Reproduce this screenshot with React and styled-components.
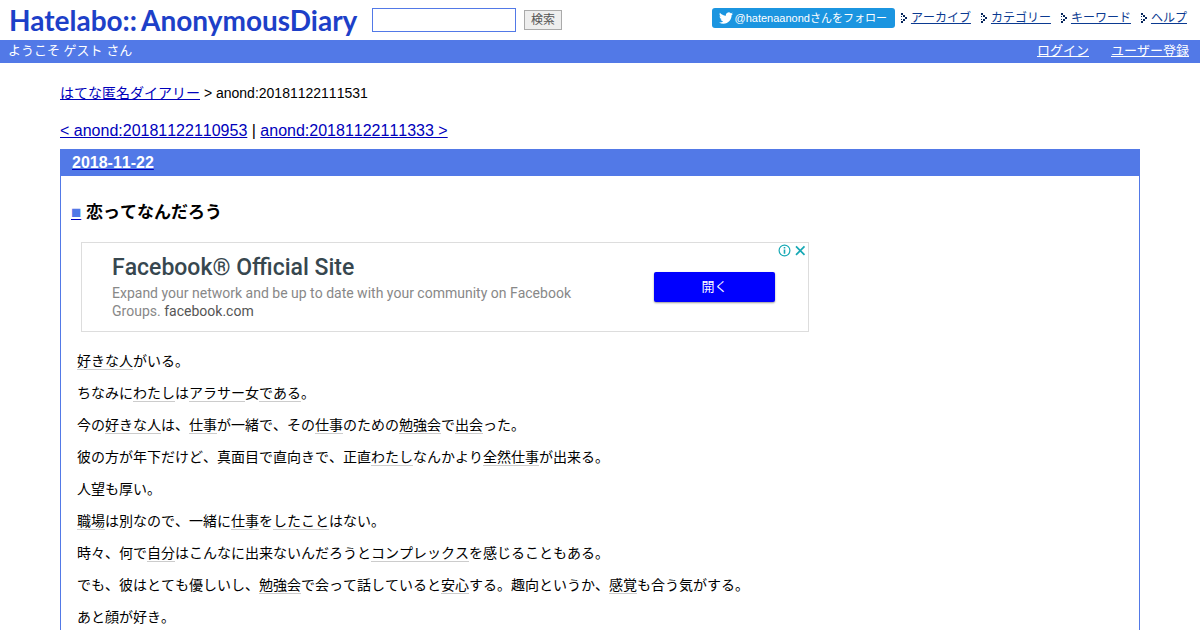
import React from "react";
import styled, { createGlobalStyle } from "styled-components";

const sans = `"Liberation Sans", "Noto Sans CJK JP", sans-serif`;

const GlobalStyle = createGlobalStyle`
  * { box-sizing: border-box; }
  body { margin: 0; background: #fff; color: #000; font-family: ${sans}; font-size: 14px; font-kerning: none; }
  a { color: #0000bb; }
`;

const Header = styled.header`
  display: flex;
  align-items: center;
  height: 40px;
  padding: 0 13px 0 9px;
`;

const Logo = styled.a`
  display: flex;
  gap: 4px;
  color: #1d40c8;
  font-family: Lato, ${sans};
  font-size: 28px;
  font-kerning: auto;
  font-weight: 700;
  line-height: 40px;
  text-decoration: none;
  width: 363px;
`;

const SearchForm = styled.form`
  display: flex;
  align-items: center;
  gap: 8px;
`;

const SearchInput = styled.input`
  width: 144px;
  height: 24px;
  border: 1px solid #5279e7;
  padding: 0 4px;
  font: 14px ${sans};
`;

const SearchButton = styled.button`
  width: 38px;
  height: 20px;
  padding: 0;
  border: 1px solid #aaa;
  background: #eee;
  color: #555;
  font: 12px/16px ${sans};
`;

const Tools = styled.div`
  display: flex;
  align-items: center;
  gap: 6px;
  margin-left: auto;
  padding-bottom: 4px;
`;

const FollowLink = styled.a`
  display: flex;
  align-items: center;
  gap: 2px;
  height: 20px;
  padding: 0 8px 0 7px;
  border-radius: 3px;
  background: #1b95e0;
  color: #fff;
  font-size: 11px;
  line-height: 20px;
  text-decoration: none;
  white-space: nowrap;
`;

const ToolList = styled.ul`
  display: flex;
  gap: 10px;
  margin: 0;
  padding: 0;
  list-style: none;
`;

const ToolItem = styled.li`
  display: flex;
  align-items: center;
  gap: 3px;
  font-size: 12px;
  line-height: 20px;
  white-space: nowrap;
  a { color: #0b3a91; }
`;

const UserBar = styled.div`
  display: flex;
  justify-content: space-between;
  height: 23px;
  padding: 0 11px 0 8px;
  background: #5279e7;
  color: #fff;
  font-size: 13px;
  line-height: 22px;
`;

const UserLinks = styled.nav`
  display: flex;
  gap: 22px;
  a { color: #fff; }
`;

const Main = styled.main`
  margin: 20px 60px 0;
`;

const Breadcrumb = styled.nav`
  line-height: 20px;
`;

const Pager = styled.nav`
  margin: 18px 0 8px;
  font-size: 16px;
  line-height: 20px;
`;

const Day = styled.section`
  border: 1px solid #5279e7;
  border-top: 0;
  padding-bottom: 20px;
`;

const DayTitle = styled.h2`
  margin: 0;
  padding: 0 11px;
  background: #5279e7;
  font-size: 16px;
  line-height: 27px;
  span { color: #fff; }
`;

const PostTitle = styled.h3`
  margin: 24px 10px 17px;
  font-size: 17px;
  line-height: 25px;
`;

const Anchor = styled.a`
  span { color: #5279e7; }
`;

const Ad = styled.aside`
  display: flex;
  align-items: center;
  position: relative;
  max-width: 728px;
  height: 90px;
  margin: 0 20px 19px;
  padding: 0 33px 0 30px;
  border: 1px solid #ddd;
  font-family: Roboto, "Noto Sans CJK JP", sans-serif;
`;

const AdText = styled.div`
  flex: 1;
  color: #888;
  font-size: 14px;
  line-height: 18px;
`;

const AdTitle = styled.div`
  margin-bottom: 2px;
  color: #37474f;
  font-size: 23px;
  font-weight: 500;
  line-height: 28px;
`;

const AdCopy = styled.p`
  max-width: 480px;
  margin: 0;
  span { color: #555; }
`;

const AdButton = styled.button`
  width: 121px;
  height: 30px;
  padding: 0;
  border: 0;
  border-radius: 2px;
  background: #0000ff;
  box-shadow: 0 1px 2px rgba(0, 0, 0, 0.4);
  color: #fff;
  font: 13px/30px Roboto, "Noto Sans CJK JP", sans-serif;
`;

const AdMarks = styled.div`
  position: absolute;
  top: 1px;
  right: 2px;
  display: flex;
  gap: 3px;
`;

const Body = styled.div`
  padding: 0 16px;
  line-height: 20px;
  p { margin: 0 0 12px; }
`;

const Keyword = styled.a`
  border-bottom: 1px solid #ccc;
  && { color: #000; }
  text-decoration: none;
`;

const Bullet = () => (
  <svg width="7" height="10" viewBox="0 0 7 10" shapeRendering="crispEdges" aria-hidden="true">
    <path fill="#06265c" d="M0 0h2v2H0zM2 2h2v2H2zM0 3h1v1H0zM4 4h2v2H4zM2 6h2v2H2zM0 6h1v1H0zM0 8h2v2H0z" />
  </svg>
);

const TwitterBird = () => (
  <svg width="14" height="14" viewBox="0 0 24 24" fill="#fff" aria-hidden="true">
    <path d="M23.95 4.57a10 10 0 0 1-2.82.77 4.96 4.96 0 0 0 2.16-2.72c-.95.55-2 .95-3.13 1.18a4.92 4.92 0 0 0-8.38 4.48C7.69 8.1 4.07 6.13 1.64 3.16a4.82 4.82 0 0 0-.67 2.48c0 1.71.87 3.21 2.19 4.1a4.9 4.9 0 0 1-2.23-.62v.06a4.92 4.92 0 0 0 3.95 4.83 5 5 0 0 1-2.21.08 4.94 4.94 0 0 0 4.6 3.42A9.87 9.87 0 0 1 0 19.54a13.99 13.99 0 0 0 7.56 2.21c9.05 0 14-7.5 14-13.98 0-.21 0-.42-.02-.63a9.94 9.94 0 0 0 2.46-2.55z" />
  </svg>
);

const tools = ["アーカイブ", "カテゴリー", "キーワード", "ヘルプ"];

// Words in square brackets are linked to their keyword page.
const paragraphs = [
  "[好きな人]がいる。",
  "ちなみに[わたし]は[アラサー]女[である]。",
  "今の[好きな人]は、[仕事]が一緒で、その[仕事]のための[勉強会]で[出会]った。",
  "彼の方が年下だけど、真面目で直向きで、正直[わたし]なんかより[全然][仕事]が出来る。",
  "人望も厚い。",
  "[職場]は別なので、一緒に[仕事]を[したこと]はない。",
  "時々、何で[自分]はこんなに出来ないんだろうと[コンプレックス]を感じることもある。",
  "でも、彼はとても優しいし、[勉強会]で会って話していると[安心]する。趣向というか、[感覚]も合う気がする。",
  "あと顔が好き。",
];

const renderText = (text) =>
  text.split(/(\[[^\]]+\])/).map((part, i) =>
    part.startsWith("[") ? (
      <Keyword key={i} href="#keyword">{part.slice(1, -1)}</Keyword>
    ) : (
      part
    )
  );

export default function App() {
  return (
    <>
      <GlobalStyle />
      <Header>
        <Logo href="#top">
          <span>Hatelabo::</span>
          <span>AnonymousDiary</span>
        </Logo>
        <SearchForm onSubmit={(e) => e.preventDefault()}>
          <SearchInput type="text" aria-label="検索" />
          <SearchButton type="submit">検索</SearchButton>
        </SearchForm>
        <Tools>
          <FollowLink href="#follow">
            <TwitterBird />
            <span>@hatenaanondさんをフォロー</span>
          </FollowLink>
          <ToolList>
            {tools.map((name) => (
              <ToolItem key={name}>
                <Bullet />
                <a href="#tool">{name}</a>
              </ToolItem>
            ))}
          </ToolList>
        </Tools>
      </Header>
      <UserBar>
        <span>ようこそ ゲスト さん</span>
        <UserLinks>
          <a href="#login">ログイン</a>
          <a href="#register">ユーザー登録</a>
        </UserLinks>
      </UserBar>
      <Main>
        <Breadcrumb>
          <a href="#home">はてな匿名ダイアリー</a> &gt; anond:20181122111531
        </Breadcrumb>
        <Pager>
          <a href="#prev">&lt; anond:20181122110953</a> | <a href="#next">anond:20181122111333 &gt;</a>
        </Pager>
        <Day>
          <DayTitle>
            <a href="#day"><span>2018-11-22</span></a>
          </DayTitle>
          <PostTitle>
            <Anchor href="#post"><span>■</span></Anchor> 恋ってなんだろう
          </PostTitle>
          <Ad>
            <AdText>
              <AdTitle>Facebook® Official Site</AdTitle>
              <AdCopy>
                Expand your network and be up to date with your community on Facebook Groups. <span>facebook.com</span>
              </AdCopy>
            </AdText>
            <AdButton type="button">開く</AdButton>
            <AdMarks>
              <svg width="13" height="13" viewBox="0 0 13 13" fill="none" stroke="#18a9b5" aria-hidden="true">
                <circle cx="6.5" cy="6.5" r="5.4" strokeWidth="1.2" />
                <path d="M6.5 5.5v4.3M6.5 3v1.5" strokeWidth="1.6" />
              </svg>
              <svg width="12" height="13" viewBox="0 0 12 13" fill="none" stroke="#18a9b5" aria-hidden="true">
                <path d="M2 2.3l8.5 8.5M10.5 2.3L2 10.8" strokeWidth="1.7" />
              </svg>
            </AdMarks>
          </Ad>
          <Body>
            {paragraphs.map((text) => (
              <p key={text}>{renderText(text)}</p>
            ))}
          </Body>
        </Day>
      </Main>
    </>
  );
}
